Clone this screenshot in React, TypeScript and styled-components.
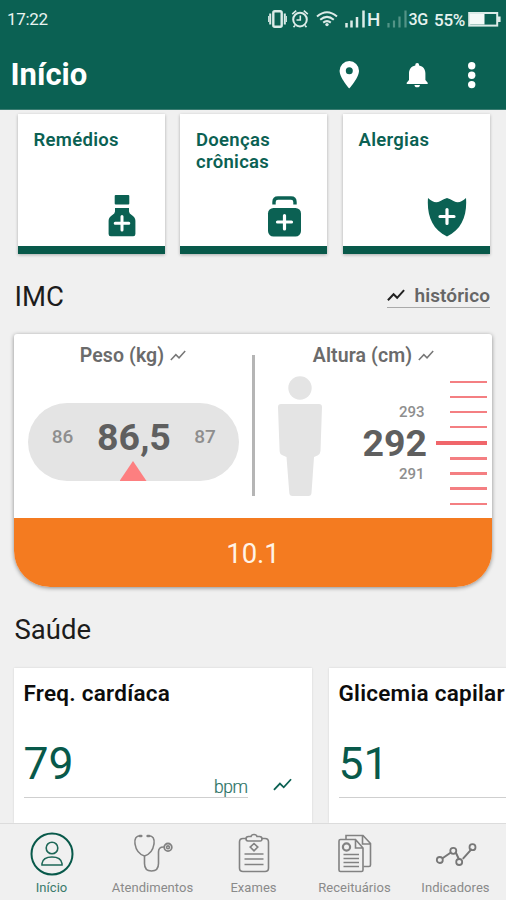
import React from "react";
import styled, { createGlobalStyle } from "styled-components";

const GREEN = "#0b6153";
const DEEP = "#08594a";

const GlobalStyle = createGlobalStyle`
  * { box-sizing: border-box; }
  body { margin: 0; background: #f0f0f0; font-family: Roboto, "Liberation Sans", sans-serif; }
  svg { display: block; flex: none; }
`;

const Screen = styled.div`
  width: 506px;
  height: 900px;
  display: flex;
  flex-direction: column;
  overflow: hidden;
  background: #f0f0f0;
`;

const Header = styled.header`
  height: 110px;
  flex: none;
  background: ${GREEN};
  color: #fff;
  border-bottom: 1px solid #3b7d72;
`;

const StatusBar = styled.div`
  height: 37px;
  padding: 0 5px 0 7px;
  display: flex;
  align-items: center;
  justify-content: space-between;
  font-size: 17px;
  letter-spacing: -0.3px;
  color: #e9f3f0;
`;

const AppBar = styled.div`
  height: 72px;
  padding: 3px 29px 0 10.5px;
  display: flex;
  align-items: center;
  justify-content: space-between;
`;

const Title = styled.h1`
  margin: 0;
  font-size: 31px;
  line-height: 36px;
  font-weight: 700;
`;

const Content = styled.main`
  flex: 1;
  min-height: 0;
  display: flex;
  flex-direction: column;
  overflow: hidden;
`;

const Shortcuts = styled.div`
  display: grid;
  grid-template-columns: repeat(3, 147px);
  column-gap: 15.5px;
  padding: 4px 0 0 17.5px;
`;

const ShortcutCard = styled.article`
  height: 140px;
  padding: 15px 16px 0;
  display: flex;
  flex-direction: column;
  justify-content: space-between;
  background: #fff;
  border-bottom: 8px solid ${DEEP};
  box-shadow: 0 1px 3px rgba(0, 0, 0, 0.28);
`;

const ShortcutLabel = styled.span`
  color: ${GREEN};
  font-size: 18.5px;
  line-height: 22px;
  font-weight: 600;
  letter-spacing: 0.3px;
`;

const ShortcutIcon = styled.div<{ $right: number }>`
  display: flex;
  justify-content: flex-end;
  padding: 0 ${(p) => p.$right}px 9px 0;
`;

const SectionHead = styled.div<{ $top: number; $height: number }>`
  flex: none;
  margin-top: ${(p) => p.$top}px;
  height: ${(p) => p.$height}px;
  padding: 0 16px 0 14.5px;
  display: flex;
  align-items: flex-start;
  justify-content: space-between;
`;

const SectionTitle = styled.h2`
  margin: 0;
  font-size: 27.5px;
  line-height: 34px;
  font-weight: 400;
  color: #1c1c1c;
`;

const HistoryLink = styled.a`
  margin-top: 4px;
  height: 24px;
  display: flex;
  align-items: center;
  gap: 9px;
  border-bottom: 1px solid #aaa;
  color: #666;
  font-size: 19px;
  line-height: 22px;
  font-weight: 600;
  letter-spacing: 0.1px;
`;

const ImcCard = styled.section`
  flex: none;
  height: 253px;
  margin: 0 14px;
  display: flex;
  flex-direction: column;
  background: #fff;
  border-radius: 3px 3px 36px 36px;
  box-shadow: 0 1px 4px rgba(0, 0, 0, 0.42);
  overflow: hidden;
`;

const Metrics = styled.div`
  height: 183.5px;
  display: grid;
  grid-template-columns: 238px 3px 1fr;
`;

const Divider = styled.div`
  height: 141px;
  margin-top: 21px;
  background: #b5b5b5;
`;

const MetricPane = styled.div`
  display: flex;
  flex-direction: column;
`;

const MetricTitle = styled.div`
  height: 22px;
  margin-top: 11px;
  display: flex;
  align-items: center;
  justify-content: center;
  gap: 6px;
  color: #6b6b6b;
  font-size: 19.5px;
  line-height: 22px;
  font-weight: 600;
  letter-spacing: 0.1px;
`;

const WeightPill = styled.div`
  position: relative;
  width: 211px;
  height: 78px;
  margin: 36px 0 0 14px;
  display: grid;
  grid-template-columns: 69px 74px 68px;
  justify-items: center;
  border-radius: 39px;
  background: #e4e4e4;
`;

const SideValue = styled.span`
  color: #8e8e8e;
  font-size: 19px;
  line-height: 68px;
  font-weight: 500;
`;

const MainValue = styled.strong`
  color: #5f5f5f;
  font-size: 37.5px;
  line-height: 69px;
  font-weight: 700;
`;

const Pointer = styled.i`
  position: absolute;
  left: 91.5px;
  bottom: 0;
  width: 27px;
  height: 20px;
  background: #fd7f80;
  clip-path: polygon(50% 0, 100% 100%, 0 100%);
`;

const HeightBody = styled.div`
  display: grid;
  grid-template-columns: 44px 97px 52px;
  column-gap: 8px;
  padding: 9px 0 0 23px;
`;

const HeightValues = styled.div`
  padding-top: 26px;
  display: flex;
  flex-direction: column;
  align-items: flex-end;
`;

const SmallValue = styled.span`
  color: #8e8e8e;
  margin-right: 2.5px;
  font-size: 15px;
  line-height: 20px;
  font-weight: 500;
`;

const HeightMain = styled(MainValue)`
  line-height: 42px;
`;

const Ruler = styled.div`
  height: 124.5px;
  margin-top: 4.5px;
  display: flex;
  flex-direction: column;
  align-items: flex-end;
  justify-content: space-between;
`;

const Tick = styled.i<{ $major?: boolean }>`
  width: ${(p) => (p.$major ? 51 : 37)}px;
  height: ${(p) => (p.$major ? 3.5 : 2.4)}px;
  background: ${(p) => (p.$major ? "#f0666b" : "#f47f82")};
`;

const Result = styled.div`
  flex: 1;
  padding: 3px 0 0 0;
  display: flex;
  align-items: center;
  justify-content: center;
  background: #f47b20;
  color: #fff3e6;
  font-size: 27.5px;
`;

const HealthRow = styled.div`
  flex: 1;
  display: flex;
  gap: 17px;
  padding-left: 14px;
`;

const HealthCard = styled.article`
  flex: none;
  width: 298px;
  padding: 11px 10px 0 9.5px;
  background: #fff;
  box-shadow: 0 0 2px rgba(0, 0, 0, 0.12);
`;

const HealthTitle = styled.h3`
  margin: 0;
  font-size: 22.5px;
  line-height: 28px;
  font-weight: 600;
  letter-spacing: 0.25px;
  white-space: nowrap;
  color: #0c0c0c;
`;

const Reading = styled.div`
  display: flex;
  align-items: flex-end;
  gap: 25px;
  margin-top: 26px;
  height: 65px;
`;

const ReadingField = styled.div`
  width: 224px;
  height: 65px;
  display: flex;
  justify-content: space-between;
  border-bottom: 1.5px solid #cfcfcf;
  color: ${DEEP};
`;

const ReadingValue = styled.span`
  font-size: 44.5px;
  line-height: 63px;
`;

const ReadingUnit = styled.span`
  align-self: flex-end;
  font-size: 17.5px;
  line-height: 20px;
  font-weight: 300;
  letter-spacing: -0.5px;
  color: #2d7466;
  -webkit-text-stroke: 0.2px #2d7466;
`;

const TrendSlot = styled.div`
  padding-bottom: 7px;
`;

const BottomNav = styled.nav`
  flex: none;
  height: 77px;
  padding-left: 1px;
  display: grid;
  grid-template-columns: repeat(5, 1fr);
  background: #f0f0f0;
  border-top: 1.5px solid #dcdcdc;
`;

const NavItem = styled.a<{ $active?: boolean }>`
  padding-top: 8px;
  display: flex;
  flex-direction: column;
  align-items: center;
  color: ${(p) => (p.$active ? "#3a796b" : "#8a8a8a")};
`;

const NavLabel = styled.span`
  margin-top: 4px;
  font-size: 13px;
  line-height: 16px;
  letter-spacing: 0.05px;
`;

const Trend = ({ w = 16, color = "#777", sw = 1.5 }: { w?: number; color?: string; sw?: number }) => (
  <svg width={w} height={w * 0.7} viewBox="0 0 20 14" fill="none" stroke={color} strokeWidth={(sw * 20) / w}>
    <path d="M1 12.5 7.3 5.8 11.3 9.8 19 1.3" />
  </svg>
);

const StatusIcons = () => (
  <svg width="233" height="26" viewBox="268 5 233 26" fill="none" stroke="#dcebe8" strokeWidth="1.8">
    <rect x="273.3" y="10.2" width="8.4" height="15.6" rx="1.5" strokeWidth="2.4" />
    <path d="M270.2 12.5v11M284.8 12.5v11" strokeWidth="2" />
    <path d="M268.6 15v6M286.4 15v6" strokeWidth="1" />
    <circle cx="300" cy="18.6" r="6.8" strokeWidth="2" />
    <path d="M300.3 14.5v4.5h-3.8M292.2 13.2l4-3.6M307.8 13.2l-4-3.6M295 24.5l-1.500 1.600M305 24.500l1.500 1.600" strokeWidth="1.6" />
    <path d="M317 15.500q10-8.500 20 0M320.200 18.700q6.800-5.600 13.600 0M323.200 21.600q3.800-3 7.600 0" strokeWidth="2" />
    <circle cx="327" cy="23.600" r="1.700" fill="#dcebe8" stroke="none" />
    <path d="M346.500 26.500v-4.500M351.500 26.500v-7M357 26.500v-10.500M363.500 26.500V9.500" strokeWidth="2.500" />
    <g stroke="#539487">
      <path d="M388.500 26.500v-4.500M394 26.500v-7M399.500 26.500v-11M405.500 26.500V9.500" strokeWidth="2.200" />
    </g>
    <g fill="#e6f2ef" stroke="none" fontFamily="Roboto, sans-serif" fontWeight="500">
      <text x="367" y="24.500" fontSize="18" textLength="13" lengthAdjust="spacingAndGlyphs">H</text>
      <text x="408.500" y="24" fontSize="16.500" textLength="19.500" lengthAdjust="spacingAndGlyphs">3G</text>
      <text x="434" y="25" fontSize="17" textLength="31" lengthAdjust="spacingAndGlyphs">55%</text>
    </g>
    <rect x="469.200" y="12" width="28" height="12.600" strokeWidth="2" />
    <path d="M470 13h14.500v10.500H470z" fill="#f4faf8" stroke="none" />
    <path d="M498 15.500h2.600v5.500H498z" fill="#dcebe8" stroke="none" />
  </svg>
);

const HeaderActions = () => (
  <svg width="142" height="34" viewBox="335 57 142 34" fill="#fff">
    <path fillRule="evenodd" d="M349.3 60a9.7 9.7 0 0 0-9.7 9.8c0 6.9 9.7 17.700 9.700 17.700s9.700-10.800 9.700-17.700a9.700 9.700 0 0 0-9.700-9.800zm0 6.300a3.500 3.500 0 1 1 0 7 3.500 3.500 0 0 1 0-7z" />
    <path d="M417.200 62a1.900 1.900 0 0 0-1.900 2v.4c-4.300.9-6.300 4-6.300 8v6.700l-2.300 2.600v1.300h21v-1.300l-2.300-2.600v-6.700c0-4-2-7.100-6.300-8V64a1.900 1.900 0 0 0-1.900-2z" />
    <path d="M414.500 84h5.400a2.700 2.300 0 0 1-5.400 0z" />
    <circle cx="471.700" cy="64.800" r="3.700" />
    <circle cx="471.700" cy="74.200" r="3.700" />
    <circle cx="471.700" cy="83.600" r="3.700" />
  </svg>
);

const Bottle = () => (
  <svg width="28" height="42" viewBox="0 0 28 42" fill={GREEN}>
    <rect x="6.7" y="0" width="14.6" height="9.500" rx="1" />
    <path d="M7 13h14v3.500q0 2 3 3.800 3.400 2.200 3.400 5.500V39q0 2.300-2.200 2.300H2.800Q.6 41.300.6 39V25.800q0-3.300 3.400-5.500 3-1.800 3-3.800z" />
    <path d="M14 21.500v13.500M7.200 28.200h13.600" stroke="#fff" strokeWidth="3" strokeLinecap="round" />
  </svg>
);

const Kit = () => (
  <svg width="35" height="41" viewBox="0 0 35 41" fill={GREEN}>
    <path d="M7 8.500V6q0-4 4-4h13q4 0 4 4v2.500" fill="none" stroke={GREEN} strokeWidth="3.400" />
    <rect x="1" y="12" width="33" height="28.500" rx="5.500" />
    <path d="M17.500 19.500v13.500M10.500 26h14" stroke="#fff" strokeWidth="3.200" strokeLinecap="round" />
  </svg>
);

const Shield = () => (
  <svg width="40" height="40" viewBox="0 0 40 40" fill={GREEN}>
    <path d="M1 1Q7 7 13 4.300 17 2 20 1 23 2 27 4.300 33 7 39 1C40.300 18 35 32.500 20 39.500 5 32.500-.3 18 1 1z" />
    <path d="M20 12.500v14M13 19.500h14" stroke="#fff" strokeWidth="3.200" strokeLinecap="round" />
  </svg>
);

const Person = () => (
  <svg width="44" height="122" viewBox="0 0 44 122" fill="#e4e4e4">
    <circle cx="22" cy="12" r="11.700" />
    <path d="M3 28h38q3 0 3 3l-1.500 44q-.2 3-3 4.500l-3.500 1.500-2.500 36q-.3 3-3 3H14.500q-3 0-3.200-3L8.500 81l-3.500-1.500q-3.200-1-3.400-4.500L0 31q0-3 3-3z" />
  </svg>
);

const ProfileIcon = () => (
  <svg width="44" height="44" viewBox="0 0 44 44" fill="none" stroke="#1d6757" strokeWidth="1.600">
    <circle cx="22" cy="22" r="20.500" stroke={DEEP} strokeWidth="2" />
    <circle cx="22" cy="16" r="5.800" />
    <path d="M12 33v-1.500Q13 25 22 25t10 6.500V33z" />
  </svg>
);

const StethoscopeIcon = () => (
  <svg width="44" height="44" viewBox="0 0 44 44" fill="none" stroke="#828282" strokeWidth="1.600" strokeLinecap="round">
    <path d="M9 3.800Q3 4 4 12q1.500 9.500 9.500 12Q21.500 21.500 23 12q1-8-5-8.200M13.500 24v7.500Q13.500 39 20.500 39T27.500 31.500V20q0-5 5-5" />
    <circle cx="37" cy="15.300" r="3.800" strokeWidth="1.800" />
    <circle cx="37" cy="15.300" r="1.400" />
    <path d="M8.800 4h1.500M16.600 4h1.500" strokeWidth="2.500" />
  </svg>
);

const ClipboardIcon = () => (
  <svg width="44" height="44" viewBox="0 0 44 44" fill="none" stroke="#828282" strokeWidth="1.600">
    <path d="M14.500 6.500H11q-3.500 0-3.500 3.500v26q0 3.500 3.500 3.500h22q3.500 0 3.500-3.500V10q0-3.500-3.500-3.500h-3.500" />
    <path d="M16 9q-2 0-2-2.200T16.500 4.500H19q.5-2 3-2t3 2h2.500q2.500 0 2.500 2.300T28 9zM22 11.500l3.800 3.600L22 18.800l-3.800-3.700z" />
    <path d="M12.500 22h19M12.500 27h19M12.500 32.500h19" />
  </svg>
);

const DocumentsIcon = () => (
  <svg width="44" height="44" viewBox="0 0 44 44" fill="none" stroke="#828282" strokeWidth="1.600">
    <path d="M13 7V3.500h17l7.500 8V33q0 1.500-1.500 1.500h-5.500M29.500 3.500v8.500h8" />
    <path d="M22.500 7.500H7.500Q6 7.500 6 9v29q0 1.500 1.500 1.500h21q1.500 0 1.500-1.500V16zM22.500 7.500V16H30" />
    <circle cx="13.500" cy="15" r="3.600" strokeWidth="2.200" />
    <path d="M10.500 22.500H26M10.500 26.500H26M10.500 30.500H26M10.500 34.500H26" />
  </svg>
);

const IndicatorsIcon = () => (
  <svg width="44" height="44" viewBox="0 0 44 44" fill="none" stroke="#777" strokeWidth="1.800">
    <path d="m8.500 26.300 8-5.500M21.800 20.500l3 6.500M28.800 26.800l9-10" strokeWidth="2" />
    <circle cx="5.800" cy="28" r="3" />
    <circle cx="19.300" cy="18.800" r="3" />
    <circle cx="25.200" cy="30" r="3" />
    <circle cx="38.500" cy="15.200" r="3" />
  </svg>
);

const shortcuts = [
  { label: "Remédios", icon: <Bottle />, right: 12.5 },
  { label: "Doenças crônicas", icon: <Kit />, right: 9 },
  { label: "Alergias", icon: <Shield />, right: 6.5 },
];

const readings = [
  { title: "Freq. cardíaca", value: "79", unit: "bpm" },
  { title: "Glicemia capilar", value: "51", unit: "" },
];

const navItems = [
  { label: "Início", icon: <ProfileIcon />, active: true },
  { label: "Atendimentos", icon: <StethoscopeIcon /> },
  { label: "Exames", icon: <ClipboardIcon /> },
  { label: "Receituários", icon: <DocumentsIcon /> },
  { label: "Indicadores", icon: <IndicatorsIcon /> },
];

export default function App() {
  return (
    <>
      <GlobalStyle />
      <Screen>
        <Header>
          <StatusBar>
            <span>17:22</span>
            <StatusIcons />
          </StatusBar>
          <AppBar>
            <Title>Início</Title>
            <HeaderActions />
          </AppBar>
        </Header>
        <Content>
          <Shortcuts>
            {shortcuts.map((s) => (
              <ShortcutCard key={s.label}>
                <ShortcutLabel>{s.label}</ShortcutLabel>
                <ShortcutIcon $right={s.right}>{s.icon}</ShortcutIcon>
              </ShortcutCard>
            ))}
          </Shortcuts>
          <SectionHead $top={26} $height={54}>
            <SectionTitle>IMC</SectionTitle>
            <HistoryLink>
              <Trend w={18} color="#222" sw={2} />
              histórico
            </HistoryLink>
          </SectionHead>
          <ImcCard>
            <Metrics>
              <MetricPane>
                <MetricTitle>
                  Peso (kg) <Trend />
                </MetricTitle>
                <WeightPill>
                  <SideValue>86</SideValue>
                  <MainValue>86,5</MainValue>
                  <SideValue>87</SideValue>
                  <Pointer />
                </WeightPill>
              </MetricPane>
              <Divider />
              <MetricPane>
                <MetricTitle>
                  Altura (cm) <Trend />
                </MetricTitle>
                <HeightBody>
                  <Person />
                  <HeightValues>
                    <SmallValue>293</SmallValue>
                    <HeightMain>292</HeightMain>
                    <SmallValue>291</SmallValue>
                  </HeightValues>
                  <Ruler>
                    {Array.from({ length: 9 }, (_, i) => (
                      <Tick key={i} $major={i === 4} />
                    ))}
                  </Ruler>
                </HeightBody>
              </MetricPane>
            </Metrics>
            <Result>10.1</Result>
          </ImcCard>
          <SectionHead $top={26} $height={55}>
            <SectionTitle>Saúde</SectionTitle>
          </SectionHead>
          <HealthRow>
            {readings.map((r) => (
              <HealthCard key={r.title}>
                <HealthTitle>{r.title}</HealthTitle>
                <Reading>
                  <ReadingField>
                    <ReadingValue>{r.value}</ReadingValue>
                    <ReadingUnit>{r.unit}</ReadingUnit>
                  </ReadingField>
                  <TrendSlot>
                    <Trend w={19} color={GREEN} sw={1.8} />
                  </TrendSlot>
                </Reading>
              </HealthCard>
            ))}
          </HealthRow>
        </Content>
        <BottomNav>
          {navItems.map((n) => (
            <NavItem key={n.label} $active={n.active}>
              {n.icon}
              <NavLabel>{n.label}</NavLabel>
            </NavItem>
          ))}
        </BottomNav>
      </Screen>
    </>
  );
}
